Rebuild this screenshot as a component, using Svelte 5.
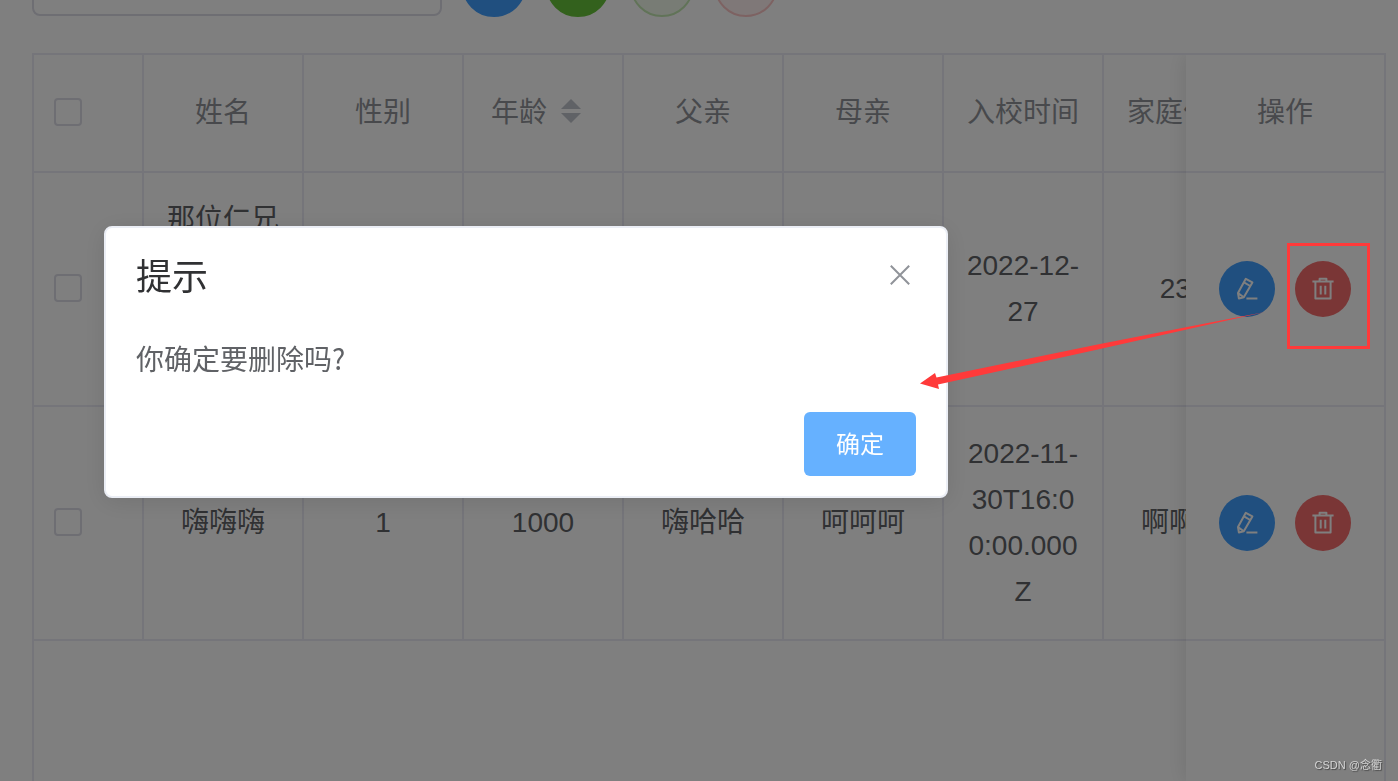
<script>
    let keyword = '';
    let showDialog = true;
    let checkedAll = false;

    let students = [
        { id: 1, checked: false, name: '那位仁兄', sex: '', age: '', father: '', mother: '', date: '2022-12-27', address: '232' },
        { id: 2, checked: false, name: '嗨嗨嗨', sex: '1', age: '1000', father: '嗨哈哈', mother: '呵呵呵', date: '2022-11-30T16:00:00.000Z', address: '啊啊啊' },
    ];

    function toggleAll(){
        students = students.map( s => ({ ...s, checked: checkedAll }) )
    }

    function openDialog(){
        showDialog = true
    }

    function closeDialog(){
        showDialog = false
    }
</script>

<div class="page">
    <div class="toolbar">
        <input type="text" class="search-input" aria-label="搜索" bind:value={keyword}>
        <button type="button" class="circle primary" aria-label="搜索"></button>
        <button type="button" class="circle success" aria-label="新增"></button>
        <button type="button" class="circle success-plain" aria-label="导入"></button>
        <button type="button" class="circle danger-plain" aria-label="批量删除"></button>
    </div>

    <div class="table-box">
        <table>
            <colgroup>
                <col class="col-check">
                <col span="7">
                <col class="col-action">
            </colgroup>
            <thead>
                <tr>
                    <th class="check"><input type="checkbox" aria-label="全选" bind:checked={checkedAll} on:change={toggleAll}></th>
                    <th>姓名</th>
                    <th>性别</th>
                    <th>
                        <div class="sortable">
                            年龄
                            <span class="caret"><i class="up"></i><i class="down"></i></span>
                        </div>
                    </th>
                    <th>父亲</th>
                    <th>母亲</th>
                    <th>入校时间</th>
                    <th>家庭住址</th>
                    <th class="fixed">操作</th>
                </tr>
            </thead>
            <tbody>
                {#each students as student, key (student.id)}
                <tr>
                    <td class="check"><input type="checkbox" aria-label="选择第{key + 1}行" bind:checked={student.checked}></td>
                    <td class:top={key === 0}>{student.name}</td>
                    <td>{student.sex}</td>
                    <td>{student.age}</td>
                    <td>{student.father}</td>
                    <td>{student.mother}</td>
                    <td>{student.date}</td>
                    <td>{student.address}</td>
                    <td class="fixed">
                        <div class="actions">
                            <button type="button" class="btn-icon edit" aria-label="编辑">
                                <svg viewBox="0 0 24 24">
                                    <path d="M10.8 1.8 17.4 5.4 8.8 20.3 3.9 21.5 3 16Z M9 5.4 15.2 9 M3.4 16.4 8.4 20" />
                                    <path d="M11.4 21.5H22.4" />
                                </svg>
                            </button>
                            <button type="button" class="btn-icon delete" aria-label="删除" on:click={openDialog}>
                                <svg viewBox="0 0 24 24">
                                    <path d="M1.4 4.5H22.6 M8.6 4V1.8H15.4V4 M4.4 4.5V21.5H19.6V4.5 M9.7 8.8V17.4 M14.3 8.8V17.4" />
                                </svg>
                            </button>
                        </div>
                    </td>
                </tr>
                {/each}
            </tbody>
        </table>
        <div class="fixed-shadow"></div>
    </div>
</div>

{#if showDialog}
<div class="mask">
    <div class="dialog" role="dialog" aria-modal="true" aria-labelledby="dialog-title">
        <div class="dialog-header">
            <h2 id="dialog-title">提示</h2>
            <button type="button" class="close" aria-label="关闭" on:click={closeDialog}>
                <svg viewBox="0 0 24 24"><path d="M2.8 2.8 21.2 21.2 M21.2 2.8 2.8 21.2" /></svg>
            </button>
        </div>
        <p>你确定要删除吗?</p>
        <div class="dialog-footer">
            <button type="button" class="confirm" on:click={closeDialog}>确定</button>
        </div>
    </div>
</div>
{/if}

<!-- red marks: the delete button leads to the dialog -->
<svg class="marks" width="1398" height="781" viewBox="0 0 1398 781" aria-hidden="true">
    <rect x="1288.5" y="244.5" width="80" height="103" />
    <path d="M920 383.5 935 373 936.5 377.5 1100 344 1200 324.5 1265 312 1200 326.5 1100 349 938 384.5 939 389Z" />
</svg>
<span class="watermark">CSDN @念衢</span>

<style>
    :global(body){
        background: #fff;
        font-family: "Liberation Sans", "Noto Sans CJK SC", sans-serif;
    }

    button, input{
        box-sizing: border-box;
        margin: 0;
        padding: 0;
        font-family: inherit;
    }

    .page{
        box-sizing: border-box;
        display: flex;
        flex-direction: column;
        gap: 36px;
        height: 100vh;
        padding: 0 12px 0 32px;
        overflow: hidden;
    }

    /* scrolled up, only the lower edge stays in view */
    .toolbar{
        display: flex;
        align-items: flex-end;
        gap: 20px;
        height: 17px;
        flex-shrink: 0;
    }

    .search-input{
        width: 410px;
        height: 80px;
        margin-bottom: 1px;
        border: 2px solid #dcdce6;
        border-radius: 8px;
        padding: 0 30px;
        font-size: 28px;
    }

    .circle{
        width: 64px;
        height: 64px;
        flex-shrink: 0;
        border: 2px solid;
        border-radius: 50%;
    }

    .primary{
        background: #409eff;
        border-color: #409eff;
    }

    .success{
        background: #67c23a;
        border-color: #67c23a;
    }

    .success-plain{
        background: #f0f9eb;
        border-color: #c2e7b0;
    }

    .danger-plain{
        background: #fef0f0;
        border-color: #fbc4c4;
    }

    .table-box{
        position: relative;
        flex: 1;
        overflow: hidden;
        border-top: 2px solid #ebebf5;
        border-left: 2px solid #ebebf5;
    }

    table{
        table-layout: fixed;
        width: 1430px;
        border-spacing: 0;
        font-size: 28px;
        line-height: 46px;
        color: #606266;
    }

    .col-check{
        width: 110px;
    }

    .col-action{
        width: 200px;
    }

    th, td{
        box-sizing: border-box;
        padding: 24px 20px;
        border-right: 2px solid #ebebf5;
        border-bottom: 2px solid #ebebf5;
        text-align: center;
        word-break: break-all;
    }

    th{
        height: 118px;
        color: #909399;
        font-weight: 400;
    }

    td{
        height: 234px;
    }

    .top{
        vertical-align: top;
    }

    .check{
        padding-bottom: 26px;
        text-align: left;
        line-height: 0;
    }

    .check input{
        appearance: none;
        width: 28px;
        height: 28px;
        border: 2px solid #dcdce6;
        border-radius: 4px;
        background: #fff;
    }

    .check input:checked{
        background: #409eff;
    }

    .sortable{
        display: flex;
        align-items: center;
        justify-content: center;
    }

    .caret{
        display: flex;
        flex-direction: column;
        align-items: center;
        gap: 4px;
        width: 48px;
        padding-bottom: 4px;
    }

    .caret i{
        border: 10px solid transparent;
    }

    .caret .up{
        border-top: 0;
        border-bottom-color: #c0c4cc;
    }

    .caret .down{
        border-bottom: 0;
        border-top-color: #c0c4cc;
    }

    .fixed{
        position: sticky;
        right: 0;
        background: #fff;
    }

    .fixed-shadow{
        position: absolute;
        top: 0;
        right: 0;
        bottom: 0;
        box-sizing: border-box;
        width: 200px;
        border-right: 2px solid #ebebf5;
        box-shadow: 0 0 20px rgba(0, 0, 0, .12);
        pointer-events: none;
    }

    .actions{
        display: flex;
        justify-content: center;
        gap: 20px;
    }

    .btn-icon{
        display: flex;
        align-items: center;
        justify-content: center;
        width: 56px;
        height: 56px;
        border: 0;
        border-radius: 50%;
    }

    .btn-icon svg, .close svg{
        width: 24px;
        height: 24px;
        fill: none;
        stroke: #fff;
        stroke-width: 2;
        stroke-linejoin: round;
    }

    .edit{
        background: #409eff;
    }

    .delete{
        background: #f56c6c;
    }

    .mask{
        position: fixed;
        inset: 0;
        display: flex;
        align-items: flex-start;
        padding: 226px 0 0 104px;
        background: rgba(0, 0, 0, .5);
    }

    .dialog{
        box-sizing: border-box;
        width: 844px;
        padding-bottom: 20px;
        border: 2px solid #ebeef5;
        border-radius: 8px;
        background: #fff;
        box-shadow: 0 4px 24px rgba(0, 0, 0, .1);
    }

    .dialog-header{
        display: flex;
        align-items: center;
        justify-content: space-between;
        padding: 30px 34px 16px 30px;
    }

    h2{
        margin: 0;
        font-size: 36px;
        font-weight: 400;
        line-height: 40px;
        color: #303133;
    }

    .close{
        display: flex;
        padding-bottom: 6px;
        border: 0;
        background: none;
    }

    .close svg{
        stroke: #909399;
    }

    p{
        margin: 0;
        padding: 20px 30px;
        font-family: "Noto Sans CJK SC", sans-serif;
        font-size: 28px;
        line-height: 48px;
        color: #606266;
    }

    .dialog-footer{
        display: flex;
        justify-content: flex-end;
        padding: 10px 30px 0;
    }

    .confirm{
        width: 112px;
        height: 64px;
        padding-bottom: 4px;
        border: 0;
        border-radius: 6px;
        background: #66b1ff;
        color: #fff;
        font-size: 24px;
    }

    .marks{
        position: absolute;
        top: 0;
        left: 0;
        pointer-events: none;
    }

    .marks rect{
        fill: none;
        stroke: #ff3a3a;
        stroke-width: 3;
    }

    .marks path{
        fill: #ff3a3a;
    }

    .watermark{
        position: fixed;
        right: 16px;
        bottom: 8px;
        font-size: 11px;
        line-height: 16px;
        color: #d4d4d4;
        text-shadow: 1px 1px 1px #444;
    }
</style>
